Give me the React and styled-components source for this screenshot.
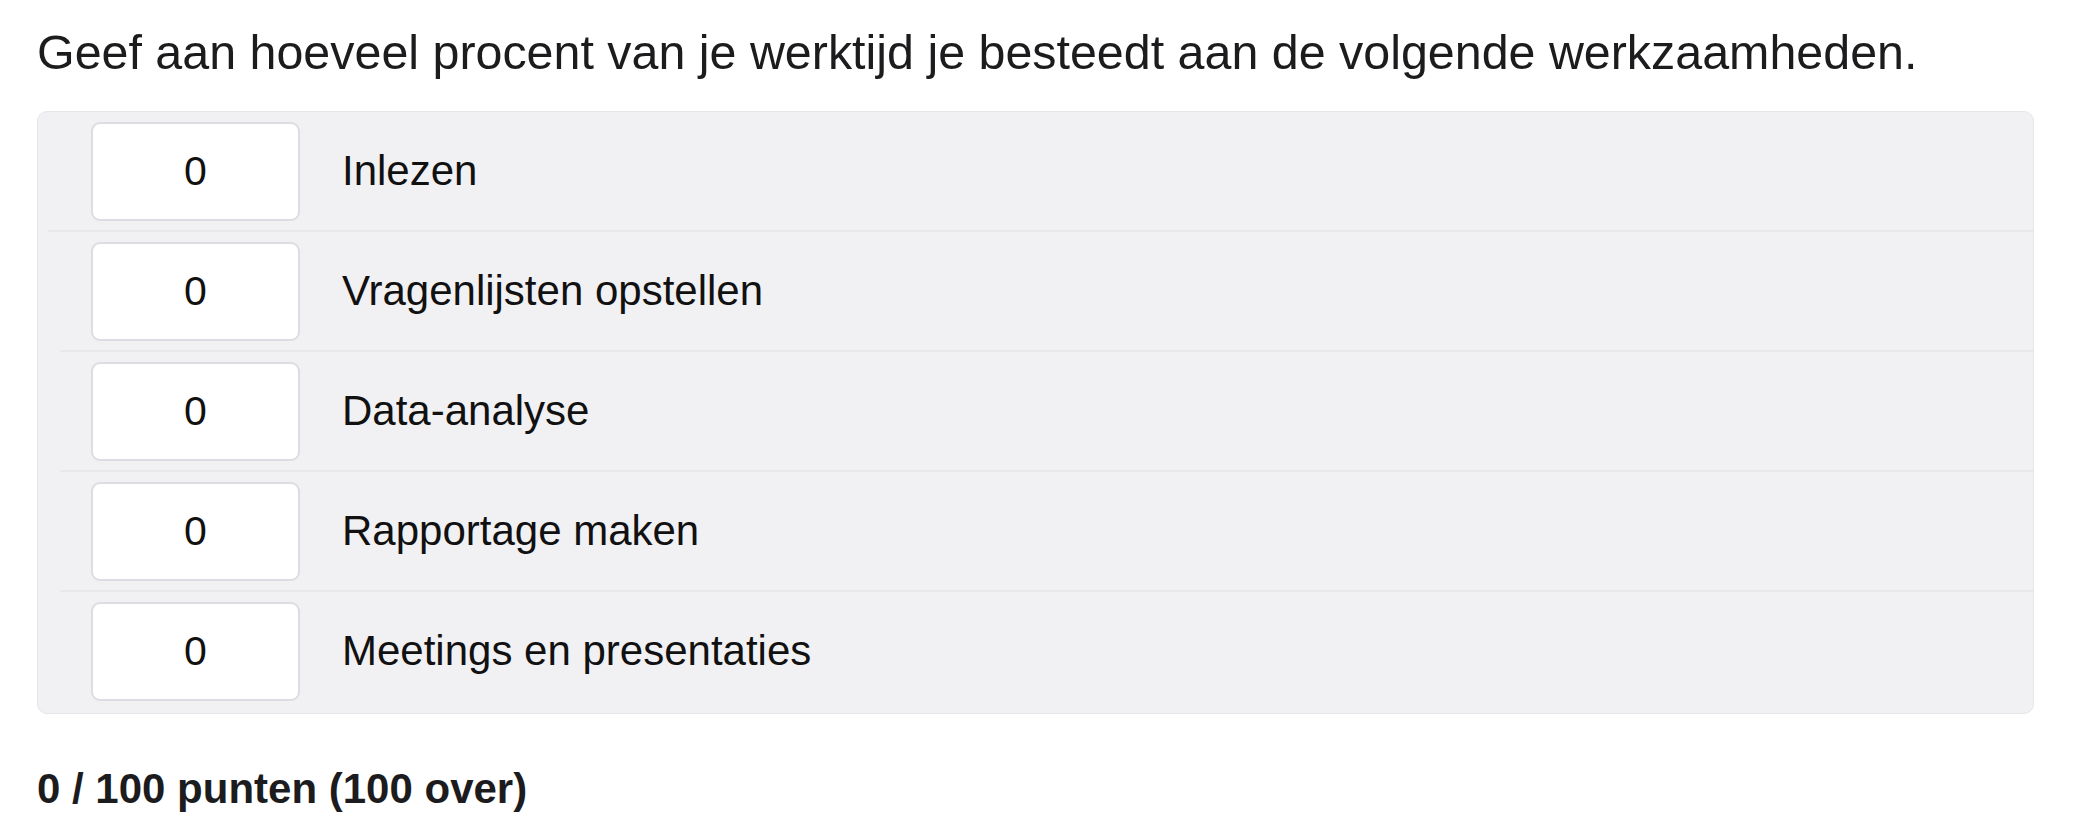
import React, {useState} from 'react';
import styled, {createGlobalStyle} from 'styled-components';

const GlobalStyle = createGlobalStyle`
    html, body {
        margin: 0;
        padding: 0;
        background: #ffffff;
    }
    body {
        font-family: "Liberation Sans", Arial, Helvetica, sans-serif;
        color: #111111;
    }
`;

const Page = styled.div`
    padding: 24px 45px 0 37px;
`;

const Question = styled.h1`
    margin: 0 0 31px 0;
    font-size: 48.4px;
    line-height: 56px;
    font-weight: 400;
    color: #1c1c1e;
`;

const Panel = styled.div`
    display: flex;
    flex-flow: column nowrap;
    padding-bottom: 3px;
    background-color: #f1f0f3;
    border: 1px solid #e6e5e9;
    border-radius: 10px;
    overflow: hidden;
`;

const Row = styled.div`
    display: flex;
    flex-flow: row nowrap;
    align-items: center;
    height: 118px;
    padding-left: 53px;
    box-sizing: border-box;
`;

const Divider = styled.div`
    height: 2px;
    margin-left: ${props => props.inset}px;
    background-color: #e8e7eb;
`;

const NumberInput = styled.input`
    outline: none;
    width: 209px;
    height: 99px;
    box-sizing: border-box;
    border: 2px solid #dddce2;
    border-radius: 9px;
    background-color: #ffffff;
    font-family: inherit;
    font-size: 41px;
    color: #111111;
    text-align: center;
    padding: 0;

    &:focus {
        border-color: #c9c8cf;
    }
`;

const Label = styled.label`
    margin-left: 42px;
    font-size: 42px;
    line-height: 48px;
    color: #111111;
`;

const Total = styled.div`
    margin-top: 51px;
    font-size: 42px;
    line-height: 48px;
    font-weight: 700;
    color: #1c1c1e;
`;

const tasks = [
    'Inlezen',
    'Vragenlijsten opstellen',
    'Data-analyse',
    'Rapportage maken',
    'Meetings en presentaties',
];

export default function App() {
    const [values, setValues] = useState(tasks.map(() => '0'));

    const onChangeHandler = (index) => ({target}) => {
        const next = [...values];
        next[index] = target.value;
        setValues(next);
    };

    const used = values.reduce((sum, v) => sum + (Number(v) || 0), 0);

    return (
        <Page>
            <GlobalStyle />
            <Question>Geef aan hoeveel procent van je werktijd je besteedt aan de volgende werkzaamheden.</Question>
            <Panel>
                {tasks.map((task, i) => (
                    <React.Fragment key={task}>
                        {i > 0 && <Divider inset={i === 1 ? 10 : 22} />}
                        <Row>
                            <NumberInput
                                type='text'
                                value={values[i]}
                                onChange={onChangeHandler(i)}
                            />
                            <Label>{task}</Label>
                        </Row>
                    </React.Fragment>
                ))}
            </Panel>
            <Total>{used} / 100 punten ({100 - used} over)</Total>
        </Page>
    );
}
